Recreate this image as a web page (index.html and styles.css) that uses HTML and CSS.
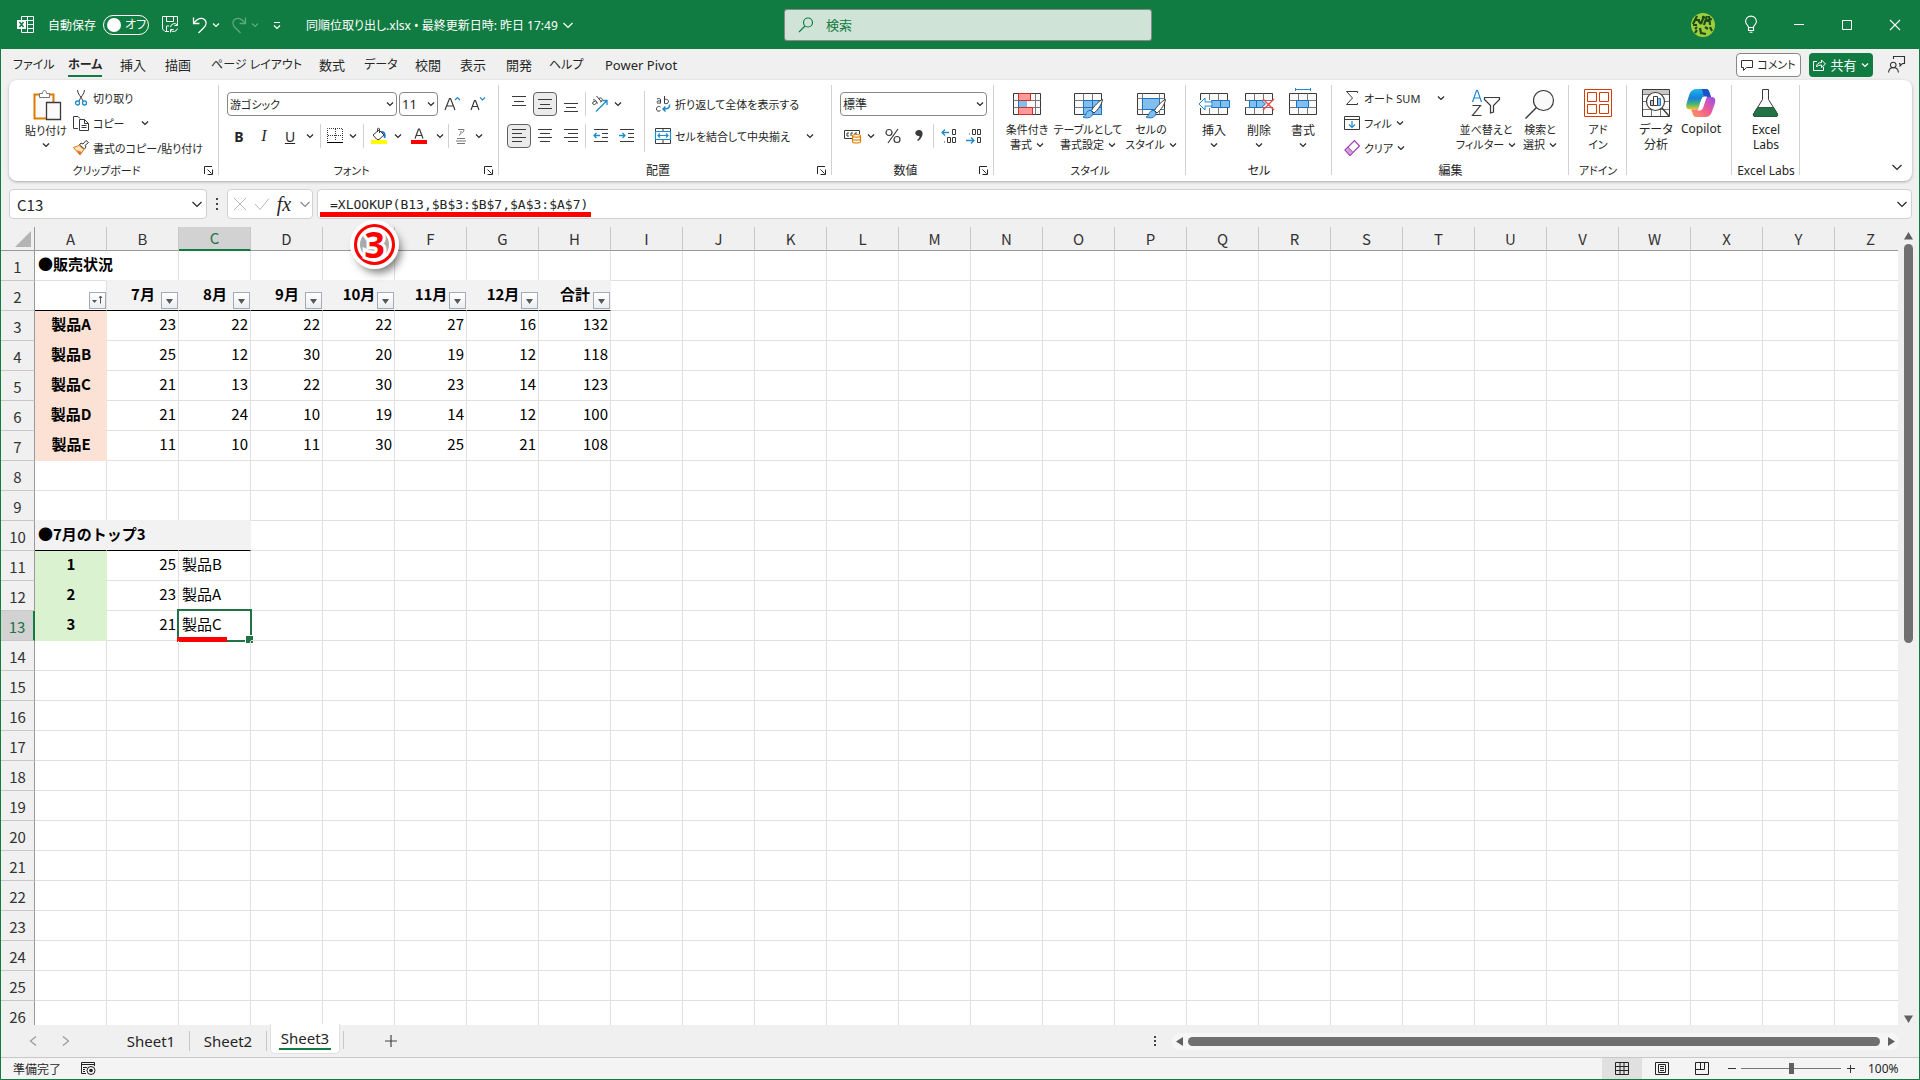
FILE: index.html
```html
<!DOCTYPE html>
<html lang="ja">
<head>
  <meta charset="UTF-8">
  <meta name="viewport" content="width=device-width, initial-scale=1.0">
  <title>同順位取り出し.xlsx - Excel</title>
  <link rel="stylesheet" href="styles.css">
</head>
<body>
  <svg class="defs" aria-hidden="true">
    <symbol id="chev" viewBox="0 0 8 8"><path d="M1 2.500l3 3 3-3" fill="none" stroke="currentColor" stroke-width="1.200"/></symbol>
    <symbol id="chev-lg" viewBox="0 0 14 14"><path d="M2.500 5l4.500 4.500L11.500 5" fill="none" stroke="currentColor" stroke-width="1.200"/></symbol>
    <symbol id="launch" viewBox="0 0 9 9"><path d="M.5 8V.5H8M3.500 3.500l4 4M8.500 3.500v5h-5" fill="none" stroke="currentColor"/></symbol>
    <symbol id="brush" viewBox="0 0 22 22"><path d="M20.500 1.500c-3 1-9 7-11 11l2.500 2.500c4-3 8-9 8.500-13.500z" fill="#fff" stroke="#3b3a39"/><path d="M9 12.500c-3-.5-4.500 1.500-5 3.500-.4 1.500-1.500 2.500-3 3 3.500 1.800 9.500 1 10-4z" fill="#83beec" stroke="#1a74c4"/></symbol>
    <symbol id="grid" viewBox="0 0 28 22"><path d="M.5.5h27v21H.5z" fill="#fafafa" stroke="#3b3a39"/><path d="M.5 7.500h27M.5 14.500h27M9.500.5v21M18.500.5v21" stroke="#797774"/></symbol>
  </svg>

  <div class="window">
    <header class="titlebar">
      <svg class="app-icon" width="17" height="17" viewBox="0 0 17 17"><path d="M4.500 4V.5h12v16h-12V13M10.500.5v16M4.500 4.500h12M10.500 8.500h6M10.500 12.500h6" fill="none" stroke="#fff"/><path d="M0 4h9v9H0z" fill="#fff"/><path d="M2.500 6l4 5M6.500 6l-4 5" stroke="#107c41" stroke-width="1.500"/></svg>
      <span class="autosave-label" id="autosave">自動保存</span>
      <button class="toggle" role="switch" aria-checked="false" aria-labelledby="autosave"><i></i>オフ</button>
      <button class="qat" aria-label="上書き保存"><svg width="17" height="17" viewBox="0 0 17 17"><path d="M7 15.500H3L.5 13V.5h15v6M4.500.5v5h7v-5M4.500 15v-5H7M8.500 11a4 4 0 0 1 7-2M15.500 6.500V9.500h-3M15.500 12.500a4 4 0 0 1-7 1.500M8.500 16.500v-3h3" fill="none" stroke="#fff"/></svg></button>
      <button class="qat undo" aria-label="元に戻す"><svg width="16" height="18" viewBox="0 0 16 18"><path d="M1.500 1.500v6h6M1.500 7.500C5 3 9 1 12.500 3.500c3 3 1.500 6-1 8.500l-5 5" fill="none" stroke="#fff" stroke-width="1.300"/></svg><svg width="8" height="8"><use href="#chev"/></svg></button>
      <button class="qat redo" aria-label="やり直し"><svg width="16" height="18" viewBox="0 0 16 18"><path d="M14.500 1.500v6h-6M14.500 7.500C11 3 7 1 3.500 3.500c-3 3-1.500 6 1 8.500l5 5" fill="none" stroke="currentColor" stroke-width="1.300"/></svg><svg width="8" height="8"><use href="#chev"/></svg></button>
      <button class="qat more" aria-label="クイック アクセスのカスタマイズ"><svg width="8" height="10" viewBox="0 0 8 10"><path d="M1 2.500h6M1 5.500l3 3 3-3" fill="none" stroke="#fff" stroke-width="1.200"/></svg></button>
      <button class="doc-title">同順位取り出し.xlsx • 最終更新日時: 昨日 17:49<svg width="14" height="14"><use href="#chev-lg"/></svg></button>
      <label class="search">
        <svg width="16" height="16" viewBox="0 0 16 16"><path d="M1 15l6-6M14.500 5.500a4.500 4.500 0 1 1-9 0 4.500 4.500 0 0 1 9 0z" fill="none" stroke="#107c41" stroke-width="1.200"/></svg>
        <input type="text" placeholder="検索" aria-label="検索">
      </label>
      <div class="window-buttons">
        <button aria-label="アカウント"><svg width="24" height="24" viewBox="0 0 24 24"><circle cx="12" cy="12" r="12" fill="#9fce3c"/><path d="M3 7h6M6 3l-4 8M7 7l3 4M11 4l5 1M13 3l-3 8M16 3l-3 9M14 8l7-2M18 3l1 9M4 16l2-2M6 17l-2 3M9 15l1 5 5 1M14 14l3 2M19 14l2 4M2 12h4" stroke="#1d4a1c" stroke-width="2.200" fill="none"/></svg></button>
        <button aria-label="ヒント"><svg width="12" height="17" viewBox="0 0 12 17"><path d="M3.500 11.500C3.500 9 .6 8.500.6 5.500a5.400 5.400 0 0 1 10.800 0c0 3-2.900 3.500-2.900 6zM3.500 11.500v3h5v-3M4.500 16.200h3" fill="none" stroke="#fff" stroke-width="1.100"/></svg></button>
        <button aria-label="最小化"><svg width="10" height="10" viewBox="0 0 10 10"><path d="M0 4.500h10" stroke="#fff"/></svg></button>
        <button aria-label="最大化"><svg width="10" height="10" viewBox="0 0 10 10"><path d="M.5.5h9v9h-9z" stroke="#fff" fill="none"/></svg></button>
        <button aria-label="閉じる"><svg width="10" height="10" viewBox="0 0 10 10"><path d="M0 0l10 10M10 0L0 10" stroke="#fff" stroke-width="1.100"/></svg></button>
      </div>
    </header>

    <div class="menu-row">
      <nav class="tabs">
        <a href="#" class="kana">ファイル</a>
        <a href="#" class="kana active">ホーム</a>
        <a href="#">挿入</a>
        <a href="#">描画</a>
        <a href="#" class="kana">ページ レイアウト</a>
        <a href="#">数式</a>
        <a href="#" class="kana">データ</a>
        <a href="#">校閲</a>
        <a href="#">表示</a>
        <a href="#">開発</a>
        <a href="#" class="kana">ヘルプ</a>
        <a href="#">Power Pivot</a>
      </nav>
      <button class="comment-btn"><svg width="12" height="12" viewBox="0 0 12 12"><path d="M.5 1.500h11v7h-6l-3 3v-3h-2z" fill="none" stroke="#333"/></svg>コメント</button>
      <button class="share-btn"><svg width="13" height="13" viewBox="0 0 13 13"><path d="M4 3.500H.5v9h10V9M3.500 9c0-3 2-4.500 5-4.500V2l4 4-4 3.500V7c-2 0-4 .5-5 2z" fill="none" stroke="#fff"/></svg>共有<svg width="8" height="8"><use href="#chev"/></svg></button>
      <button class="person-btn" aria-label="フィードバック"><svg width="17" height="17" viewBox="0 0 17 17"><path d="M.5 16.500c.5-4 3-5 5-5s4.500 1 5 5M8 8.500a2.800 2.800 0 1 1-5.500 0 2.800 2.800 0 0 1 5.500 0zM5.500 3V.5h11v7h-2l-2.500 2.500V7.500h-1" fill="none" stroke="#333" stroke-width="1.100"/></svg></button>
    </div>

    <div class="ribbon">
      <section class="group clipboard">
        <div class="body">
          <button class="big"><svg width="32" height="32" viewBox="0 0 32 32"><path d="M4.500 4.500h19v24h-19z" fill="#fafafa" stroke="#e07b00" stroke-width="2"/><path d="M9.500 7.500v-4h3c0-4 4-4 4 0h3v4z" fill="#fff" stroke="#797774"/><path d="M16.500 12.500h14v17h-14z" fill="#fafafa" stroke="#3b3a39" stroke-width="1.300"/></svg>貼り付け<svg width="8" height="8"><use href="#chev"/></svg></button>
          <div class="list">
            <button><svg width="16" height="16" viewBox="0 0 16 16"><path d="M4.500 0c0 4 4 7 5.500 11M11.500 0c0 4-4 7-5.500 11" fill="none" stroke="#3b3a39"/><circle cx="4.500" cy="13" r="2" fill="none" stroke="#1e8bcd" stroke-width="1.300"/><circle cx="11.500" cy="13" r="2" fill="none" stroke="#1e8bcd" stroke-width="1.300"/></svg>切り取り</button>
            <button><svg width="16" height="16" viewBox="0 0 16 16"><path d="M5 13.500H.5V1.500H5L7 3.500M6.500 4.500h5l4 4v7h-9zM11.500 4.500v4h4M8.500 10.500h5M8.500 12.500h5" fill="none" stroke="#3b3a39"/></svg>コピー<svg class="far" width="8" height="8"><use href="#chev"/></svg></button>
            <button><svg width="16" height="16" viewBox="0 0 16 16"><path d="M15.500 2.500L13 .5l-3 3.500-2-1-1.500 2 5 4 1.500-2-1-1.500z" fill="#fff" stroke="#3b3a39"/><path d="M6 5.500L.5 7.500l6.500 7.500 4-5.500z" fill="#ffe3c2" stroke="#e07b00"/><path d="M3 10l4 5 2-3z" fill="#e8743b"/></svg>書式のコピー/貼り付け</button>
          </div>
        </div>
        <div class="caption"><span>クリップボード</span><button aria-label="クリップボードの設定"><svg width="9" height="9"><use href="#launch"/></svg></button></div>
      </section>

      <section class="group font">
        <div class="body rows">
          <div class="row">
            <div class="combo font-name"><select aria-label="フォント"><option>游ゴシック</option></select><svg width="8" height="8"><use href="#chev"/></svg></div>
            <div class="combo font-size"><select aria-label="フォント サイズ"><option>11</option></select><svg width="8" height="8"><use href="#chev"/></svg></div>
            <button class="tool w24" aria-label="フォント サイズの拡大"><svg width="16" height="16" viewBox="0 0 16 16"><path d="M1 14L5.500 2.500h1L11 14M2.500 10h7" fill="none" stroke="#3b3a39" stroke-width="1.200"/><path d="M11 4l2.500-2.500L16 4" fill="none" stroke="#1e8bcd" stroke-width="1.200"/></svg></button>
            <button class="tool" aria-label="フォント サイズの縮小"><svg width="16" height="16" viewBox="0 0 16 16"><path d="M2 14L5.500 4.500h1L10 14M3.500 10.500h5" fill="none" stroke="#3b3a39" stroke-width="1.200"/><path d="M11 1.500L13.500 4 16 1.500" fill="none" stroke="#1e8bcd" stroke-width="1.200"/></svg></button>
          </div>
          <div class="row">
            <button class="tool w24"><b>B</b></button>
            <button class="tool"><em>I</em></button>
            <button class="tool"><u>U</u></button>
            <button class="drop" aria-label="下線の種類"><svg width="8" height="8"><use href="#chev"/></svg></button>
            <i class="sep"></i>
            <button class="tool w22" aria-label="罫線"><svg width="16" height="16" viewBox="0 0 16 16"><path d="M.5 13V.5h15V13M8.500 1v12M1 7.500h14" fill="none" stroke="#3b3a39" stroke-dasharray="1 1"/><path d="M0 14.500h16" stroke="#000"/></svg></button>
            <button class="drop" aria-label="罫線の種類"><svg width="8" height="8"><use href="#chev"/></svg></button>
            <i class="sep"></i>
            <button class="tool w24" aria-label="塗りつぶしの色"><svg width="16" height="16" viewBox="0 0 16 16"><path d="M2 7l6-5 5 5-5 4.500H6zM6.500 4V1c0-1 2-1 2 0v4" fill="none" stroke="#3b3a39"/><path d="M10 4c3-.5 4.500 2 3.500 6" fill="none" stroke="#1a74c4" stroke-width="1.800"/><path d="M0 12h16v4H0z" fill="#ff0"/></svg></button>
            <button class="drop" aria-label="塗りつぶしの色を選択"><svg width="8" height="8"><use href="#chev"/></svg></button>
            <button class="tool w28" aria-label="フォントの色"><svg width="16" height="16" viewBox="0 0 16 16"><path d="M4 10.500L7.500 1h1L12 10.500M5.500 7.500h5" fill="none" stroke="#3b3a39" stroke-width="1.200"/><path d="M0 12h16v4H0z" fill="red"/></svg></button>
            <button class="drop" aria-label="フォントの色を選択"><svg width="8" height="8"><use href="#chev"/></svg></button>
            <i class="sep tight"></i>
            <button class="tool w22 ruby" aria-label="ふりがな"><svg width="10" height="16" viewBox="0 0 10 16"><path d="M2 1.500h6c0 2-1 3-2.500 3.500M5 3c0 2-.5 3.500-2 4.500M1 10.500h8M1 15.500h8M0 13h10" fill="none" stroke="#777"/></svg></button>
            <button class="drop" aria-label="ふりがなの設定"><svg width="8" height="8"><use href="#chev"/></svg></button>
          </div>
        </div>
        <div class="caption"><span>フォント</span><button aria-label="フォントの設定"><svg width="9" height="9"><use href="#launch"/></svg></button></div>
      </section>

      <section class="group align">
        <div class="body">
          <div class="rows">
            <div class="row">
              <button class="tool" aria-label="上揃え"><svg width="14" height="16" viewBox="0 0 14 16"><path d="M0 .5h14M2 5.500h10M0 9.500h14" stroke="#3b3a39"/></svg></button>
              <button class="tool on" aria-label="上下中央揃え"><svg width="14" height="16" viewBox="0 0 14 16"><path d="M0 3.500h14M2 8.500h10M0 12.500h14" stroke="#3b3a39"/></svg></button>
              <button class="tool" aria-label="下揃え"><svg width="14" height="16" viewBox="0 0 14 16"><path d="M0 7.500h14M2 11.500h10M0 15.500h14" stroke="#3b3a39"/></svg></button>
              <i class="sep tight"></i>
              <button class="tool w24" aria-label="方向"><svg width="17" height="16" viewBox="0 0 17 16"><path d="M5 15.500L16 4.500M11.500 4.500H16V9" fill="none" stroke="#1e8bcd" stroke-width="1.300"/><path d="M2 4c2-1 3.500 1 4.500 3.500M4.500 5.500c-2-.5-3.500 1-2.500 2.500s3.500 0 3.500-2M5.500 0l5 6M8 2.500c2-1.500 4 .5 3 2-.5 1-1 1.500-1.500 1.500" fill="none" stroke="#3b3a39"/></svg></button>
              <button class="drop" aria-label="方向の種類"><svg width="8" height="8"><use href="#chev"/></svg></button>
            </div>
            <div class="row">
              <button class="tool on" aria-label="左揃え"><svg width="14" height="16" viewBox="0 0 14 16"><path d="M0 1.500h14M0 5.500h10M0 9.500h14M0 13.500h10" stroke="#3b3a39"/></svg></button>
              <button class="tool" aria-label="中央揃え"><svg width="14" height="16" viewBox="0 0 14 16"><path d="M0 1.500h14M2 5.500h10M0 9.500h14M2 13.500h10" stroke="#3b3a39"/></svg></button>
              <button class="tool" aria-label="右揃え"><svg width="14" height="16" viewBox="0 0 14 16"><path d="M0 1.500h14M4 5.500h10M0 9.500h14M4 13.500h10" stroke="#3b3a39"/></svg></button>
              <i class="sep tight"></i>
              <button class="tool" aria-label="インデントを減らす"><svg width="15" height="16" viewBox="0 0 15 16"><path d="M1 1.500h14M9 5.500h6M9 9.500h6M1 13.500h14" stroke="#3b3a39"/><path d="M7 7.500H1M3.500 5L1 7.500 3.500 10" fill="none" stroke="#1e8bcd" stroke-width="1.300"/></svg></button>
              <button class="tool" aria-label="インデントを増やす"><svg width="15" height="16" viewBox="0 0 15 16"><path d="M1 1.500h14M9 5.500h6M9 9.500h6M1 13.500h14" stroke="#3b3a39"/><path d="M0 7.500h6M3.500 5L6 7.500 3.500 10" fill="none" stroke="#1e8bcd" stroke-width="1.300"/></svg></button>
            </div>
          </div>
          <div class="rows wrap-col">
            <button class="row"><svg width="16" height="16" viewBox="0 0 16 16"><path d="M2 3c2-1 3.500-.5 3.500 1v3.500M5.500 5C3 4.500 1.500 5.500 2 6.500s2.500 1 3.500 0M9.500 0v7.500M9.500 4c1.500-1.500 4-.5 4 1.500s-2.500 3-4 1.500M5.500 11c-2-1.500-4 0-4 2s2 3 4 1.500" fill="none" stroke="#3b3a39"/><path d="M14.500 8.500c.5 3-1 4.500-6 4.500M10.500 10.500L8 13l2.500 2.500" fill="none" stroke="#1e8bcd" stroke-width="1.500"/></svg>折り返して全体を表示する</button>
            <button class="row"><svg width="16" height="16" viewBox="0 0 16 16"><path d="M.5.5h15v15H.5zM8 .5v3M8 12v3.500" fill="none" stroke="#3b3a39"/><path d="M.5 3.500h15v8H.5zM3 7.500h10M5 5.500l-2 2 2 2M11 5.500l2 2-2 2" fill="none" stroke="#1e8bcd" stroke-width="1.200"/></svg>セルを結合して中央揃え<svg class="end" width="8" height="8"><use href="#chev"/></svg></button>
          </div>
        </div>
        <div class="caption kanji"><span>配置</span><button aria-label="配置の設定"><svg width="9" height="9"><use href="#launch"/></svg></button></div>
      </section>

      <section class="group number">
        <div class="body rows">
          <div class="row">
            <div class="combo number-format"><select aria-label="数値の書式"><option>標準</option></select><svg width="8" height="8"><use href="#chev"/></svg></div>
          </div>
          <div class="row">
            <button class="tool w24" aria-label="通貨表示形式"><svg width="17" height="16" viewBox="0 0 17 16"><path d="M8 10.500H.5v-8h15V6M5 5H3v3h2M7 8V5h2M11 7V5h2" fill="none" stroke="#3b3a39"/><path d="M8.500 8c0-2 8-2 8 0v5.500c0 2-8 2-8 0zM8.500 8c0 1.500 8 1.500 8 0M8.500 11c0 1.500 8 1.500 8 0" fill="#fff" stroke="#e07b00" stroke-width="1.200"/></svg></button>
            <button class="drop" aria-label="通貨の種類"><svg width="8" height="8"><use href="#chev"/></svg></button>
            <button class="tool w30 percent" aria-label="パーセント スタイル"><svg width="16" height="16" viewBox="0 0 16 16"><path d="M13 1L3 15" stroke="#3b3a39" stroke-width="1.200"/><circle cx="4" cy="4.500" r="3" fill="none" stroke="#3b3a39" stroke-width="1.200"/><circle cx="12" cy="11.500" r="3" fill="none" stroke="#3b3a39" stroke-width="1.200"/></svg></button>
            <button class="tool w22" aria-label="桁区切りスタイル"><svg width="8" height="14" viewBox="0 0 8 14"><path d="M4 1c5 0 5 7-1 11l-1-1c2-1.500 2.500-2.500 2.500-4C-1 7.500-1 1 4 1z" fill="#3b3a39"/></svg></button>
            <i class="sep"></i>
            <button class="tool w24" aria-label="小数点以下の表示桁数を増やす"><svg width="16" height="16" viewBox="0 0 16 16"><path d="M8 4.500H1M4 1.500l-3 3 3 3" fill="none" stroke="#1e8bcd" stroke-width="1.300"/><path d="M11.500 1.500h3v5h-3zM6.500 9.500h3v5h-3zM11.500 9.500h3v5h-3zM3 14h1" fill="none" stroke="#3b3a39"/></svg></button>
            <button class="tool" aria-label="小数点以下の表示桁数を減らす"><svg width="16" height="16" viewBox="0 0 16 16"><path d="M0 12.500h8M5 9.500l3 3-3 3" fill="none" stroke="#1e8bcd" stroke-width="1.300"/><path d="M6.500 1.500h3v5h-3zM11.500 1.500h3v5h-3zM11.500 9.500h3v5h-3zM3 6h1" fill="none" stroke="#3b3a39"/></svg></button>
          </div>
        </div>
        <div class="caption kanji"><span>数値</span><button aria-label="数値の設定"><svg width="9" height="9"><use href="#launch"/></svg></button></div>
      </section>

      <section class="group styles">
        <div class="body">
          <button class="big w56"><svg width="32" height="32" viewBox="0 0 32 32"><path d="M2.500 3.500h27v21h-27z" fill="#fafafa" stroke="#3b3a39"/><path d="M2.500 10.500h27M2.500 17.500h27M24.500 3.500v21" stroke="#797774"/><path d="M7.500 3.500h12v7h-12zM7.500 17.500h14v7h-14z" fill="#ff9a9a" stroke="#d92b2b"/><path d="M8 11h8v6H8z" fill="#83beec"/><path d="M7.500 10.500v7" stroke="#1a74c4"/></svg><span>条件付き<br>書式<svg width="8" height="8"><use href="#chev"/></svg></span></button>
          <button class="big w66"><svg width="32" height="32" viewBox="0 0 32 32"><use href="#grid" x="2" y="3" width="28" height="22"/><path d="M11.500 10.500h18v14h-18z" fill="#83beec" stroke="#1a74c4"/><path d="M11.500 17.500h18M20.500 10.500v14" stroke="#1a74c4"/><use href="#brush" x="10" y="8" width="22" height="22"/></svg><span>テーブルとして<br>書式設定<svg width="8" height="8"><use href="#chev"/></svg></span></button>
          <button class="big w60"><svg width="32" height="32" viewBox="0 0 32 32"><path d="M2.500 3.500h27v21h-27z" fill="#fafafa" stroke="#3b3a39"/><path d="M2.500 8.500h27M2.500 19.500h27M7.500 3.500v21M24.500 3.500v21" stroke="#797774"/><path d="M7.500 8.500h17v11h-17z" fill="#83beec" stroke="#1a74c4"/><use href="#brush" x="10" y="8" width="22" height="22"/></svg><span>セルの<br>スタイル<svg width="8" height="8"><use href="#chev"/></svg></span></button>
        </div>
        <div class="caption"><span>スタイル</span></div>
      </section>

      <section class="group cells">
        <div class="body">
          <button class="big w44"><svg width="32" height="32" viewBox="0 0 32 32"><use href="#grid" x="2" y="3" width="28" height="22"/><path d="M0 10h32v8H0z" fill="#fff"/><path d="M13.500 10.500h18v7h-18zM22.500 10.500v7" fill="#83beec" stroke="#1a74c4"/><path d="M7 8l-6 6 6 6v-4h7v-4H7z" fill="#fff" stroke="#1e8bcd"/></svg>挿入<svg width="8" height="8"><use href="#chev"/></svg></button>
          <button class="big w46"><svg width="32" height="32" viewBox="0 0 32 32"><use href="#grid" x="2" y="3" width="28" height="22"/><path d="M0 11h32v6H0z" fill="#fff"/><path d="M6.500 10.500h12l4 3.500-4 3.500h-12zM13.500 10.500v7" fill="#83beec" stroke="#1a74c4"/><path d="M20 9l11 11M31 9L20 20" stroke="#e84b4b" stroke-width="1.400"/></svg>削除<svg width="8" height="8"><use href="#chev"/></svg></button>
          <button class="big w42"><svg width="32" height="32" viewBox="0 0 32 32"><use href="#grid" x="2" y="3" width="28" height="22"/><path d="M9.500 10.500h12v7h-12z" fill="#83beec" stroke="#1a74c4"/><path d="M8.500 -2v3M23.500 -2v3M8.500 -.5h15" stroke="#1e8bcd"/></svg>書式<svg width="8" height="8"><use href="#chev"/></svg></button>
        </div>
        <div class="caption"><span>セル</span></div>
      </section>

      <section class="group edit">
        <div class="body">
          <div class="list">
            <button><svg width="16" height="16" viewBox="0 0 16 16"><path d="M13.500 3V1.500h-11l6 6.500-6 6.500h11V13" fill="none" stroke="#3b3a39"/></svg>オート SUM<svg class="mid" width="8" height="8"><use href="#chev"/></svg></button>
            <button><svg width="16" height="16" viewBox="0 0 16 16"><path d="M.5 1.500h15v13H.5zM.5 4.500h15" fill="none" stroke="#3b3a39"/><path d="M8 6v6.500M5 9.500l3 3 3-3" fill="none" stroke="#1e8bcd" stroke-width="1.200"/></svg>フィル<svg class="near" width="8" height="8"><use href="#chev"/></svg></button>
            <button><svg width="16" height="16" viewBox="0 0 16 16"><path d="M1 10L10.500.5l5 5.500L6 15.500z" fill="#fff" stroke="#a33db5" stroke-width="1.200"/><path d="M1 10l3-3 5 5.500-3 3z" fill="#d59ddc" stroke="#a33db5"/></svg>クリア<svg class="near" width="8" height="8"><use href="#chev"/></svg></button>
          </div>
          <button class="big w62"><svg width="32" height="32" viewBox="0 0 32 32"><path d="M2.500 13L6.500 1.500h1L11.500 13M4 9h6" fill="none" stroke="#1e8bcd" stroke-width="1.200"/><path d="M2.500 16.500h8l-8 10h9M14.500 8.500h15v2l-6 6v6.500l-3 1v-7.500l-6-6z" fill="#fafafa" stroke="#3b3a39" stroke-width="1.200"/></svg><span>並べ替えと<br>フィルター<svg width="8" height="8"><use href="#chev"/></svg></span></button>
          <button class="big w46"><svg width="32" height="32" viewBox="0 0 32 32"><circle cx="19.500" cy="11.500" r="10" fill="#fafafa" stroke="#3b3a39" stroke-width="1.200"/><path d="M1.500 29.500l11-11" stroke="#3b3a39" stroke-width="1.400"/></svg><span>検索と<br>選択<svg width="8" height="8"><use href="#chev"/></svg></span></button>
        </div>
        <div class="caption kanji"><span>編集</span></div>
      </section>

      <section class="group addin">
        <div class="body">
          <button class="big"><svg width="32" height="32" viewBox="0 0 32 32"><path d="M2.500.5h27v27h-27zM5.500 3.500h9v9h-9zM17.500 3.500h9v9h-9zM5.500 15.500h9v9h-9zM17.500 15.500h9v9h-9z" fill="none" stroke="#d83b01"/></svg><span>アド<br>イン</span></button>
        </div>
        <div class="caption"><span>アドイン</span></div>
      </section>

      <section class="group data">
        <div class="body">
          <button class="big w46"><svg width="32" height="32" viewBox="0 0 32 32"><path d="M2.500.5h27v27h-27z" fill="#fafafa" stroke="#3b3a39"/><path d="M3 1h26v4H3z" fill="#c8c6c4"/><path d="M3 5.500h26M3 12.500h26M3 20.500h26M11.500 20v7M20.500 20v7" stroke="#797774"/><circle cx="15.500" cy="12.500" r="9" fill="#fff" stroke="#3b3a39" stroke-width="1.200"/><path d="M10.500 11.500h4v5h-4z" fill="#c8c6c4" stroke="#3b3a39"/><path d="M18.500 9.500h2v7h-3v-7z" fill="#83beec" stroke="#1a74c4"/><path d="M13.500 7.500h4v9h-4z" fill="#fff" stroke="#3b3a39"/><path d="M22 19l7 8" stroke="#3b3a39" stroke-width="1.300"/></svg><span>データ<br>分析</span></button>
          <button class="big w44"><svg width="32" height="32" viewBox="0 0 32 32">
            <defs>
              <linearGradient id="cp1" x1="0" y1="0" x2="0" y2="1"><stop offset="0" stop-color="#1bb5ee"/><stop offset=".45" stop-color="#1680d8"/><stop offset=".75" stop-color="#4cb874"/><stop offset="1" stop-color="#f7c91c"/></linearGradient>
              <linearGradient id="cp2" x1="1" y1="0" x2="0" y2="1"><stop offset="0" stop-color="#9b4df0"/><stop offset=".5" stop-color="#ee5c95"/><stop offset="1" stop-color="#ff9b55"/></linearGradient>
            </defs>
            <path d="M12 0h9c2 0 3 1.500 3.500 3.500L26 8h-6c-2 0-3 1-3.500 3L14 18c-.5 1.500-1.500 2.500-4 2.500H5c-3 0-4.500-2-3.500-6L4.500 5C5.500 2 8 0 12 0z" fill="url(#cp1)"/>
            <path d="M16 0h5c2 0 3 1.500 3.500 3.500L26 8h-6c-2 0-2-8-4-8z" fill="#1c51c8"/>
            <path d="M20 28h-9c-2 0-3-1.500-3.500-4L6 20.500h4c2.500 0 3.500-1 4-2.500l3-8c.5-1.500 1.500-2 3.500-2h6c3 0 4.500 2 3.500 6l-3 8.500c-1 3.500-3 5.500-7 5.500z" fill="url(#cp2)"/>
            <path d="M15 14l2-5c.5-1 1.500-1.500 3-1.500h2L18 19c-1 2-2 2.500-4 2.500h-2c1.500-1 2-3 3-7.500z" fill="#fff"/>
          </svg>Copilot</button>
        </div>
        <div class="caption"></div>
      </section>

      <section class="group labs">
        <div class="body">
          <button class="big"><svg width="32" height="32" viewBox="0 0 32 32"><path d="M12.500.5h6v10l9 14.500c.5 1.500 0 2.500-1.500 2.500H5c-1.500 0-2-1-1.500-2.500l9-14.500z" fill="#fafafa" stroke="#3b3a39"/><path d="M7.500 18.500h16l4 6.500c.5 1.500 0 2.500-1.500 2.500H5c-1.500 0-2-1-1.500-2.500z" fill="#217346" stroke="#2b5740"/></svg><span>Excel<br>Labs</span></button>
        </div>
        <div class="caption kanji"><span>Excel Labs</span></div>
      </section>
      <button class="collapse" aria-label="リボンを折りたたむ"><svg width="14" height="14"><use href="#chev-lg"/></svg></button>
    </div>

    <div class="formula-row">
      <div class="box name-box"><input type="text" value="C13" aria-label="名前ボックス"><svg width="14" height="14"><use href="#chev-lg"/></svg></div>
      <svg class="dots" width="2" height="12" viewBox="0 0 2 12"><path d="M0 0h2v2H0zM0 5h2v2H0zM0 10h2v2H0z" fill="#444"/></svg>
      <div class="box fx-box">
        <button aria-label="キャンセル"><svg width="14" height="14" viewBox="0 0 14 14"><path d="M1 1l12 12M13 1L1 13" stroke="#b8b8b8"/></svg></button>
        <button aria-label="入力"><svg width="16" height="14" viewBox="0 0 16 14"><path d="M1 7l5 5.500L15 1.500" stroke="#b8b8b8" fill="none"/></svg></button>
        <button class="fx">fx</button>
        <svg class="gray" width="14" height="14"><use href="#chev-lg"/></svg>
      </div>
      <div class="box formula"><input type="text" value="=XLOOKUP(B13,$B$3:$B$7,$A$3:$A$7)" aria-label="数式バー"><svg width="14" height="14"><use href="#chev-lg"/></svg></div>
    </div>

    <main class="sheet-area">
      <div class="sheet-view">
        <table class="sheet" id="sheet"></table>
      </div>
      <div class="vscroll">
        <svg width="9" height="8" viewBox="0 0 9 8"><path d="M4.500 0L9 7.500H0z" fill="#606060"/></svg>
        <div class="vtrack"><div class="vthumb"></div></div>
        <svg width="9" height="8" viewBox="0 0 9 8"><path d="M4.500 8L9 .5H0z" fill="#606060"/></svg>
      </div>
      <div class="step-mark">3</div>
    </main>

    <div class="sheet-tabs">
      <button class="nav" aria-label="前のシート"><svg width="8" height="10" viewBox="0 0 8 10"><path d="M7 .5L1.500 5 7 9.500" fill="none" stroke="#999" stroke-width="1.200"/></svg></button>
      <button class="nav" aria-label="次のシート"><svg width="8" height="10" viewBox="0 0 8 10"><path d="M1 .5L6.500 5 1 9.500" fill="none" stroke="#999" stroke-width="1.200"/></svg></button>
      <button class="tab first">Sheet1</button>
      <button class="tab">Sheet2</button>
      <button class="tab current"><span>Sheet3</span></button>
      <button class="add" aria-label="新しいシート"><svg width="12" height="12" viewBox="0 0 12 12"><path d="M6 0v12M0 6h12" stroke="#444" stroke-width="1.200"/></svg></button>
      <svg class="dots" width="2" height="11" viewBox="0 0 2 11"><path d="M0 0h2v2H0zM0 4h2v2H0zM0 8h2v2H0z" fill="#444"/></svg>
      <div class="hscroll">
        <svg width="7" height="9" viewBox="0 0 7 9"><path d="M0 4.500L7 0v9z" fill="#606060"/></svg>
        <div class="hthumb"></div>
        <svg width="7" height="9" viewBox="0 0 7 9"><path d="M7 4.500L0 0v9z" fill="#606060"/></svg>
      </div>
    </div>

    <footer class="status">
      <span>準備完了</span>
      <svg class="macro" width="15" height="13" viewBox="0 0 15 13"><path d="M5 11.500H.5V.5h13V4M.5 2.500h13M2 5.500h4M2 7.500h2M2 9.500h2" fill="none" stroke="#222"/><circle cx="10" cy="8.500" r="4" fill="none" stroke="#222"/><circle cx="10" cy="8.500" r="1.800" fill="#222"/></svg>
      <div class="status-right">
        <button class="view on" aria-label="標準"><svg width="14" height="13" viewBox="0 0 14 13"><path d="M.5.5h13v12H.5zM5 .5v12M9 .5v12M.5 4.500h13M.5 8.500h13" fill="none" stroke="#222"/></svg></button>
        <button class="view" aria-label="ページ レイアウト"><svg width="14" height="13" viewBox="0 0 14 13"><path d="M.5.5h13v12H.5zM3.500 2.500h7v8h-7zM5 4.500h4M5 6.500h4M5 8.500h4" fill="none" stroke="#222"/></svg></button>
        <button class="view" aria-label="改ページ プレビュー"><svg width="14" height="13" viewBox="0 0 14 13"><path d="M.5.5h13v12H.5zM.5 7.500h9v-7M5.500.5v7" fill="none" stroke="#222"/></svg></button>
        <button class="zoom-btn" aria-label="縮小"><svg width="8" height="8" viewBox="0 0 8 8"><path d="M0 3.500h8" stroke="#333"/></svg></button>
        <input type="range" min="0" max="100" value="50" aria-label="ズーム">
        <button class="zoom-btn" aria-label="拡大"><svg width="8" height="8" viewBox="0 0 8 8"><path d="M0 3.500h8M3.500 0v8" stroke="#333"/></svg></button>
        <span class="zoom-value">100%</span>
      </div>
    </footer>
  </div>
  <script src="script.js"></script>
</body>
</html>
```
FILE: styles.css
```css
* { box-sizing: border-box; }
body {
  margin: 0; overflow: hidden;
  font-family: "Noto Sans", "Noto Sans CJK JP", sans-serif;
  font-size: 12px; font-feature-settings: "palt";
  color: #262626;
}
button, input, select { font: inherit; font-feature-settings: inherit; color: inherit; }
button { padding: 0; border: 0; background: none; white-space: nowrap; }
input { min-width: 0; padding: 0; border: 0; background: none; outline: none; }
svg { display: block; flex: none; overflow: visible; }
.defs { position: absolute; width: 0; height: 0; }

.window {
  display: flex; flex-direction: column; height: 100vh;
  border: 1px solid #107c41; border-top: 0; background: #f0f0f0;
}

/* title bar */
.titlebar {
  position: relative; display: flex; align-items: center;
  height: 49px; padding-left: 16px; background: #107c41; color: #fff;
}
.autosave-label { width: 48px; margin: 0 7px 0 14px; white-space: nowrap; }
.toggle {
  display: flex; align-items: center; gap: 4px;
  width: 46px; height: 20px; padding-left: 3px;
  border: 1px solid #fff; border-radius: 10px; line-height: 18px;
}
.toggle i { width: 14px; height: 14px; border-radius: 50%; background: #fff; }
.qat { display: flex; align-items: center; gap: 4px; margin-left: 13px; }
.redo { margin-left: 11px; color: #5fa97f; }
.more { margin-left: 14px; }
.doc-title { display: flex; align-items: center; gap: 3px; margin-left: 25px; }
.search {
  position: absolute; left: calc(50% - 176px); top: 9px;
  display: flex; align-items: center; gap: 12px;
  width: 368px; height: 32px; padding-left: 13px;
  background: #cfe3d7; border: 1px solid #888; border-radius: 3px;
}
.search input { flex: 1; font-size: 13px; }
.search input::placeholder { color: #107c41; }
.window-buttons { display: flex; margin-left: auto; }
.window-buttons button {
  display: flex; align-items: center; justify-content: center;
  width: 48px; height: 48px;
}

/* menu */
.menu-row { display: flex; align-items: center; height: 31px; padding: 0 14px 0 12px; }
.tabs {
  display: grid; flex: 1; justify-items: start;
  grid-template-columns: 55px 52px 45px 46px 108px 45px 51px 45px 46px 43px 56px 80px;
}
.tabs a {
  height: 24px; line-height: 24px; font-size: 13px;
  color: #262626; text-decoration: none; white-space: nowrap;
}
.tabs .kana { font-size: 12px; }
.tabs .active { font-weight: bold; border-bottom: 2px solid #107c41; }
.comment-btn, .share-btn {
  display: flex; align-items: center; justify-content: center; gap: 4px;
  height: 24px; border-radius: 4px; line-height: 18px;
}
.comment-btn { width: 65px; border: 1px solid #888; background: #fff; font-size: 11px; }
.share-btn { width: 64px; margin: 0 15px 0 8px; background: #107c41; color: #fff; font-size: 13px; }

/* ribbon */
.ribbon {
  display: flex; align-items: flex-start;
  height: 101px; margin: 0 7px 0 8px; padding-top: 5px;
  background: #fff; border-radius: 8px; box-shadow: 0 1px 3px rgba(0, 0, 0, 0.3);
  font-size: 11px;
}
.group { position: relative; flex: none; height: 94px; }
.group::after {
  content: ""; position: absolute; right: 0; top: 0;
  width: 1px; height: 90px; background: #d1d1d1;
}
.clipboard { width: 210px; }
.font { width: 280px; }
.align { width: 333px; }
.number { width: 162px; font-size: 12px; }
.styles { width: 192px; }
.cells { width: 146px; font-size: 12px; }
.edit { width: 237px; }
.addin { width: 58px; }
.data { width: 105px; font-size: 12px; }
.labs { width: 68px; font-size: 12px; }
.body { display: flex; height: 76px; }
.clipboard .body { padding-left: 12px; gap: 2px; }
.font .body, .number .body { padding-left: 8px; }
.align .body { padding-left: 7px; }
.styles .body { padding-left: 5px; }
.cells .body, .data .body { padding-left: 6px; }
.edit .body { padding-left: 12px; }
.addin .body, .labs .body { justify-content: center; }
.caption { display: flex; height: 18px; line-height: 20px; white-space: nowrap; }
.caption.kanji { font-size: 12px; }
.caption span { flex: 1; text-align: center; }
.caption button { display: flex; align-items: center; width: 15px; }

.big {
  display: flex; flex-direction: column; align-items: center;
  width: 50px; padding-top: 5px; line-height: 15px;
}
.big span svg { display: inline-block; margin-left: 4px; }
.big > svg:nth-child(2) { margin-top: 3px; }
.cells .big > svg:first-child, .clipboard .big > svg:first-child { margin-bottom: 1px; }
.edit .big, .addin .big, .data .big, .labs .big { padding-top: 4px; }
.edit .big span, .addin .big span, .data .big span, .labs .big span { padding-top: 1px; }
.list { display: flex; flex-direction: column; }
.list button { display: flex; align-items: center; gap: 4px; height: 25px; }
.edit .list { width: 111px; }
.list .far { margin-left: 12px; }
.list .mid { margin-left: 13px; }

.rows { display: flex; flex-direction: column; gap: 8px; padding-top: 7px; }
.row { display: flex; align-items: center; height: 24px; }
.tool {
  display: flex; align-items: center; justify-content: center;
  width: 26px; height: 24px; font-size: 14px;
}
.tool.on { width: 24px; margin: 0 1px; border: 1px solid #616161; border-radius: 4px; background: #ebebeb; }
.drop { display: flex; justify-content: center; width: 14px; }
.sep { width: 1px; height: 24px; margin: 0 3px; background: #d1d1d1; }
.sep.tight { margin: 0 1px; }
.w22 { width: 22px; }
.w24 { width: 24px; }
.w28 { width: 28px; }
.w30 { width: 30px; }
.w42 { width: 42px; }
.w44 { width: 44px; }
.w46 { width: 46px; }
.w56 { width: 56px; }
.w60 { width: 60px; }
.w62 { width: 62px; }
.w66 { width: 66px; }
.tool em { font-family: "Liberation Serif", serif; font-size: 16px; }
.combo {
  display: flex; align-items: center; height: 24px; margin-right: 2px;
  padding: 0 2px 0 2px; border: 1px solid #888; border-radius: 4px;
}
.combo select { flex: 1; min-width: 0; padding: 0; border: 0; background: none; appearance: none; }
.font-name { width: 170px; }
.font-size { width: 39px; }
.font-size select { font-size: 13px; }
.number-format { width: 147px; }
.wrap-col { position: relative; margin-left: 16px; }
.wrap-col::before {
  content: ""; position: absolute; left: -11px; top: 6px;
  width: 1px; height: 61px; background: #d1d1d1;
}
.wrap-col .row { gap: 4px; }
.wrap-col .end { margin-left: 12px; }
.collapse { align-self: flex-end; margin: 0 8px 7px auto; }

/* formula bar */
.formula-row { display: flex; align-items: center; height: 46px; padding: 0 7px 0 8px; }
.box {
  display: flex; align-items: center; height: 30px;
  background: #fff; border: 1px solid #d1d1d1; border-radius: 4px;
}
.name-box { width: 198px; padding: 0 2px 0 7px; }
.name-box input { flex: 1; font-size: 15px; font-family: "Noto Sans CJK JP", sans-serif; }
.formula-row .dots { margin: 0 9px; }
.fx-box { justify-content: space-between; width: 86px; padding: 0 0 0 5px; margin-right: 4px; }
.fx { font: italic 20px "Liberation Serif", serif; }
.gray { color: #888; }
.formula { position: relative; flex: 1; padding: 0 2px 0 12px; }
.formula input { flex: 1; font: 13px "DejaVu Sans Mono", monospace; }
.formula::after {
  content: ""; position: absolute; left: 2px; bottom: 1px;
  width: 271px; height: 5px; background: #f00;
}

/* sheet */
.sheet-area { position: relative; display: flex; flex: 1; min-height: 0; }
.sheet-view { flex: 1; overflow: hidden; background: #fff; }
.sheet {
  width: 1906px; table-layout: fixed; border-collapse: separate; border-spacing: 0;
  font-family: "Noto Sans CJK JP", sans-serif; font-size: 15px; line-height: 20px;
  font-feature-settings: normal; color: #000;
}
.sheet th, .sheet td { height: 30px; padding: 0; }
.sheet thead th {
  height: 24px; background: #f0f0f0; font-weight: normal; color: #333;
  border-right: 1px solid #c8c8c8; border-bottom: 1px solid #999;
}
.sheet thead .corner { width: 34px; border-right-color: #999; }
.corner svg { margin: 0 3px 0 auto; }
.sheet tbody th {
  padding-top: 3px; background: #f0f0f0; font-weight: normal; color: #333;
  border-right: 1px solid #999; border-bottom: 1px solid #c8c8c8;
}
.sheet thead .picked { background: #d2d2d2; color: #217346; border-bottom: 2px solid #107c41; }
.sheet tbody .picked { background: #d2d2d2; color: #217346; border-right: 2px solid #107c41; }
.sheet td {
  position: relative; padding: 0 2px 4px 3px; white-space: nowrap;
  border-right: 1px solid #e0e0e0; border-bottom: 1px solid #e0e0e0;
}
.sheet .num { text-align: right; }
.sheet .bold { font-weight: bold; z-index: 1; }
.sheet .center { text-align: center; font-weight: bold; }
.sheet .spill { border-right-color: #fff; }
.sheet .above-gray { border-bottom-color: #f2f2f2; }
.sheet .gray-fill { background: #f2f2f2; border-right-color: #f2f2f2; }
.sheet .under { border-bottom-color: #000; }
.sheet .orange { background: #fbe2d5; border-color: #fbe2d5; }
.sheet .green { background: #daf2d0; border-color: #daf2d0; }
.filter {
  position: absolute; right: 0; bottom: 1px;
  display: flex; align-items: flex-end; justify-content: center;
  width: 17px; height: 17px; padding-bottom: 4px;
  border: 1px solid #a5abb5; background: linear-gradient(#fff, #ebeef2);
}
.cursor {
  position: absolute; left: -2px; top: -2px; right: -2px; bottom: -2px;
  border: 2px solid #217346;
}
.cursor::before {
  content: ""; position: absolute; left: -2px; bottom: -2px;
  width: 50px; height: 5px; background: #f00;
}
.cursor::after {
  content: ""; position: absolute; right: -4px; bottom: -4px;
  width: 7px; height: 7px; background: #217346; border: 1px solid #fff;
}
.step-mark {
  position: absolute; left: 353px; top: -3px;
  width: 41px; height: 41px; border: 3px solid #f00; border-radius: 50%;
  background: #aaa; text-align: center;
  box-shadow: 0 0 0 4px #fff, inset 0 0 0 3px #fff, 4px 6px 8px 2px rgba(0, 0, 0, 0.5);
  font: bold 36px/35px "Noto Sans", sans-serif; color: #f00;
  -webkit-text-stroke: 6px #fff; paint-order: stroke fill;
}
.vscroll {
  display: flex; flex-direction: column; align-items: center;
  width: 21px; padding: 5px 0 2px;
}
.vtrack { flex: 1; width: 9px; padding: 4px 0; }
.vthumb { height: 52%; border-radius: 5px; background: #707070; }

/* sheet tabs */
.sheet-tabs {
  position: relative; display: flex; align-items: center; height: 33px;
  padding: 0 20px 0 15px; border-bottom: 1px solid #c8c8c8;
}
.nav { display: flex; justify-content: center; width: 33px; }
.tab { position: relative; width: 77px; height: 20px; font-size: 15px; line-height: 20px; border-right: 1px solid #c8c8c8; }
.first { margin-left: 31px; }
.current { width: 70px; height: 30px; align-self: flex-start; margin: -1px 7px 0 3px; background: #fff; border: 1px solid #e0e0e0; border-top: 0; border-radius: 0 0 5px 5px; }
.current span { display: inline-block; padding: 0 2px; border-bottom: 2px solid #107c41; }
.current::after { content: ""; position: absolute; right: -5px; top: 7px; width: 1px; height: 18px; background: #c8c8c8; }
.add { margin-left: 38px; }
.sheet-tabs .dots { margin-left: auto; }
.hscroll {
  display: flex; align-items: center; gap: 5px;
  width: calc(39% - 7px); height: 17px; margin-left: 16px; padding: 0 4px;
  background: #f6f6f6; border-radius: 8px;
}
.hthumb { flex: 1; height: 9px; margin-right: 3px; border-radius: 5px; background: #707070; }

/* status bar */
.status { display: flex; align-items: center; height: 21px; padding-left: 12px; background: #f4f4f4; }
.macro { margin-left: 20px; }
.status-right { display: flex; align-items: center; height: 21px; margin-left: auto; padding-right: 18px; }
.view { display: flex; align-items: center; justify-content: center; width: 40px; height: 21px; }
.view.on { background: #e0e0e0; }
.zoom-btn { display: flex; justify-content: center; width: 19px; }
.status input[type=range] {
  width: 100px; height: 21px; margin: 0; appearance: none;
  background: linear-gradient(#777, #777) center / 100% 1px no-repeat;
}
.status input[type=range]::-webkit-slider-thumb { appearance: none; width: 5px; height: 11px; background: #606060; }
.zoom-value { width: 33px; margin-left: 8px; }
```
FILE: script.js
```js
const COLS = 'ABCDEFGHIJKLMNOPQRSTUVWXYZ'.split('');
const ROWS = 26;
const months = ['7月', '8月', '9月', '10月', '11月', '12月', '合計'];
const sales = [
  ['製品A', 23, 22, 22, 22, 27, 16, 132],
  ['製品B', 25, 12, 30, 20, 19, 12, 118],
  ['製品C', 21, 13, 22, 30, 23, 14, 123],
  ['製品D', 21, 24, 10, 19, 14, 12, 100],
  ['製品E', 11, 10, 11, 30, 25, 21, 108],
];
const top3 = [[1, 25, '製品B'], [2, 23, '製品A'], [3, 21, '製品C']];

const arrow = '<button class="filter" aria-label="フィルター"><svg width="7" height="5" viewBox="0 0 7 5"><path d="M0 0h7L3.500 5z" fill="#555"/></svg></button>';
const sorted = '<button class="filter" aria-label="並べ替え済み"><svg width="11" height="9" viewBox="0 0 11 9"><path d="M0 5h5L2.500 8z" fill="#555"/><path d="M8.500 8.500V1M7 3l1.500-2L10 3" fill="none" stroke="#555"/></svg></button>';

const cells = {};
function put(ref, html, cls) { cells[ref] = { html: html, cls: cls }; }

put('A1', '●販売状況', 'bold spill');
put('A2', sorted, 'under');
months.forEach((m, i) => {
  put(COLS[i + 1] + 1, '', 'above-gray');
  put(COLS[i + 1] + 2, m + arrow, 'center gray-fill under');
});
sales.forEach((row, r) => row.forEach((v, c) => put(COLS[c] + (r + 3), v, c ? 'num' : 'center orange')));
['A9', 'B9', 'C9'].forEach(ref => put(ref, '', 'above-gray'));
put('A10', '●7月のトップ3', 'bold gray-fill under');
put('B10', '', 'gray-fill under');
put('C10', '', 'gray-fill under');
top3.forEach((row, r) => {
  put('A' + (r + 11), row[0], 'center green');
  put('B' + (r + 11), row[1], 'num');
  put('C' + (r + 11), row[2], '');
});
cells.C13.html += '<div class="cursor"></div>';

let html = '<thead><tr><th class="corner"><svg width="16" height="16" viewBox="0 0 16 16"><path d="M16 0v16H0z" fill="#b4b4b4"/></svg></th>';
COLS.forEach(c => { html += `<th class="${c === 'C' ? 'picked' : ''}">${c}</th>`; });
html += '</tr></thead><tbody>';
for (let r = 1; r <= ROWS; r++) {
  html += `<tr><th class="${r === 13 ? 'picked' : ''}">${r}</th>`;
  COLS.forEach(c => {
    const cell = cells[c + r] || { html: '', cls: '' };
    html += `<td class="${cell.cls}">${cell.html}</td>`;
  });
  html += '</tr>';
}
document.getElementById('sheet').innerHTML = html + '</tbody>';
```
